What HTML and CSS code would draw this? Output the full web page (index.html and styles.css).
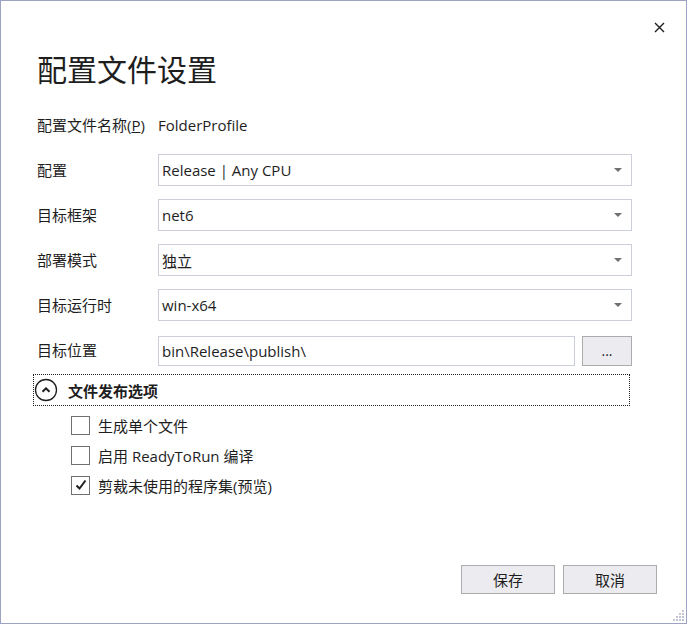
FILE: index.html
```html
<!DOCTYPE html>
<html lang="zh-CN">
<head>
<meta charset="utf-8">
<title>配置文件设置</title>
<link rel="stylesheet" href="styles.css">
</head>
<body>
<div class="window">
  <div class="close-row">
    <button class="close" aria-label="关闭">
      <svg width="11" height="11" viewBox="0 0 11 11"><path d="M1 1L10 10M10 1L1 10" stroke="#1e1e1e" stroke-width="1.4" fill="none"/></svg>
    </button>
  </div>
  <h1 class="title">配置文件设置</h1>
  <div class="form">
    <div class="label">配置文件名称(<u>P</u>)</div>
    <div class="value">FolderProfile</div>

    <div class="label">配置</div>
    <div class="select"><span>Release | Any CPU</span><i class="arrow"></i></div>

    <div class="label">目标框架</div>
    <div class="select"><span>net6</span><i class="arrow"></i></div>

    <div class="label">部署模式</div>
    <div class="select"><span>独立</span><i class="arrow"></i></div>

    <div class="label">目标运行时</div>
    <div class="select"><span>win-x64</span><i class="arrow"></i></div>

    <div class="label">目标位置</div>
    <div class="path-row">
      <div class="textbox">bin\Release\publish\</div>
      <button class="browse">...</button>
    </div>
  </div>

  <div class="section-head">
    <span class="expander">
      <svg width="24" height="24" viewBox="0 0 24 24"><circle cx="12" cy="12" r="10.5" stroke="#1e1e1e" stroke-width="1.3" fill="none"/><path d="M8.5 13.8L12 10.3L15.5 13.8" stroke="#1e1e1e" stroke-width="2" fill="none"/></svg>
    </span>
    <span class="section-title">文件发布选项</span>
  </div>

  <div class="options">
    <label class="check"><span class="box"></span><span>生成单个文件</span></label>
    <label class="check"><span class="box"></span><span>启用 ReadyToRun 编译</span></label>
    <label class="check"><span class="box checked"><svg width="12" height="12" viewBox="0 0 12 12"><path d="M1.5 6.5L4.5 9.5L10.5 1.5" stroke="#1e1e1e" stroke-width="2" fill="none"/></svg></span><span>剪裁未使用的程序集(预览)</span></label>
  </div>

  <div class="footer">
    <button class="btn">保存</button>
    <button class="btn">取消</button>
  </div>
  <div class="grip">
    <svg width="12" height="12" viewBox="0 0 12 12" fill="#c4c6d6">
      <rect x="9" y="0" width="2" height="2"/>
      <rect x="9" y="3" width="2" height="2"/><rect x="6" y="3" width="2" height="2"/>
      <rect x="9" y="6" width="2" height="2"/><rect x="6" y="6" width="2" height="2"/><rect x="3" y="6" width="2" height="2"/>
      <rect x="9" y="9" width="2" height="2"/><rect x="6" y="9" width="2" height="2"/><rect x="3" y="9" width="2" height="2"/><rect x="0" y="9" width="2" height="2"/>
    </svg>
  </div>
</div>
</body>
</html>
```

FILE: styles.css
```css
* { box-sizing: border-box; }
html, body { margin: 0; padding: 0; background: #ffffff; }
body {
  font-family: "Open Sans", "Noto Sans CJK SC", sans-serif;
  font-size: 15px;
  color: #1e1e1e;
}
.window {
  position: relative;
  width: 687px;
  height: 624px;
  border: 1px solid #9ea2c2;
  background: #fff;
  display: flex;
  flex-direction: column;
  padding: 0 29px 29px 36px;
}
.close-row {
  display: flex;
  justify-content: flex-end;
  height: 40px;
  padding-top: 15px;
  margin-right: -13px;
}
.close {
  width: 22px; height: 22px;
  border: 0; background: transparent; padding: 0;
  display: flex; align-items: center; justify-content: center;
}
.title {
  margin: 7px 0 0 0;
  font-family: "Noto Sans CJK SC", sans-serif;
  font-weight: 400;
  font-size: 30px;
  line-height: 40px;
  color: #1e1e1e;
}
.form {
  margin-top: 21px;
  display: grid;
  grid-template-columns: 121px 474px;
  grid-auto-rows: 32px;
  row-gap: 13px;
  align-items: center;
}
.label, .value { line-height: 20px; white-space: nowrap; }
.select {
  height: 32px;
  border: 1px solid #cccedb;
  display: flex;
  align-items: center;
  justify-content: space-between;
  padding: 0 9px 0 3px;
}
.arrow {
  width: 0; height: 0;
  border-left: 4px solid transparent;
  border-right: 4px solid transparent;
  border-top: 4px solid #717171;
}
.path-row {
  display: flex;
  gap: 7px;
  align-items: center;
  height: 32px;
  padding-top: 2px;
}
.textbox {
  flex: 1;
  height: 30px;
  border: 1px solid #cccedb;
  display: flex;
  align-items: center;
  padding: 0 3px;
}
.browse {
  width: 50px;
  height: 30px;
  border: 1px solid #acacac;
  background: #ececf0;
  font-family: inherit;
  font-size: 14px;
  color: #1e1e1e;
  padding: 0;
  line-height: 24px;
}
.section-head {
  margin: 8px 0 0 -4px;
  width: 597px;
  height: 32px;
  border: 1px dotted #1e1e1e;
  display: flex;
  align-items: center;
  gap: 10px;
}
.expander { display: flex; width: 24px; height: 24px; }
.section-title { font-weight: 700; }
.options {
  margin-top: 9px;
  padding-left: 34px;
  display: flex;
  flex-direction: column;
  gap: 10px;
}
.check {
  display: flex;
  align-items: center;
  gap: 8px;
  height: 20px;
}
.box {
  width: 19px; height: 19px;
  border: 1px solid #707070;
  background: #fff;
  display: flex; align-items: center; justify-content: center;
}
.footer {
  margin-top: auto;
  display: flex;
  justify-content: flex-end;
  gap: 8px;
}
.btn {
  width: 94px;
  height: 29px;
  border: 1px solid #acacac;
  background: #ececf0;
  font-family: "Noto Sans CJK SC", sans-serif;
  font-size: 15px;
  color: #1e1e1e;
  padding: 0;
}
.grip {
  position: absolute;
  right: 1px;
  bottom: 1px;
  width: 12px; height: 12px;
  display: flex;
}
```
